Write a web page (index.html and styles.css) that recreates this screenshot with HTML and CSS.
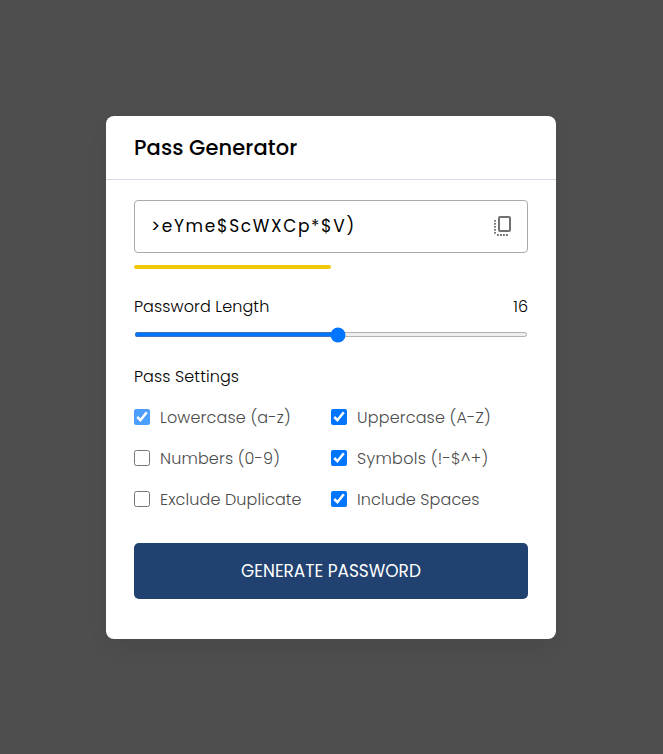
FILE: index.html
```html
<!DOCTYPE html>
<html lang="en">
<head>
<meta charset="utf-8">
<title>Pass Generator</title>
<link rel="stylesheet" href="styles.css">
</head>
<body>
<main class="card">
  <h1 class="title">Pass Generator</h1>
  <div class="content">
    <div class="password">
      <span class="value">&gt;eYme$ScWXCp*$V)</span>
      <svg class="copy" viewBox="0 0 20 22" aria-hidden="true">
        <rect x="6" y="2" width="11" height="14" rx="1"/>
        <path class="dots" d="M2 5V20M4 20H15"/>
      </svg>
    </div>
    <div class="strength"></div>
    <div class="row"><label for="length">Password Length</label><span class="count">16</span></div>
    <input class="range" id="length" type="range" min="1" max="30" value="16">
    <h2 class="settings">Pass Settings</h2>
    <div class="options">
      <label class="option"><input type="checkbox" checked class="locked"><span class="wide">Lowercase (a-z)</span></label>
      <label class="option"><input type="checkbox" checked><span class="wide">Uppercase (A-Z)</span></label>
      <label class="option"><input type="checkbox"><span class="wide">Numbers (0-9)</span></label>
      <label class="option"><input type="checkbox" checked><span class="widest">Symbols (!-$^+)</span></label>
      <label class="option"><input type="checkbox"><span>Exclude Duplicate</span></label>
      <label class="option"><input type="checkbox" checked><span>Include Spaces</span></label>
    </div>
    <button class="generate">GENERATE PASSWORD</button>
  </div>
</main>
</body>
</html>
```
FILE: styles.css
```css
* { box-sizing: border-box; margin: 0; padding: 0; }
body {
  min-height: 754px;
  padding: 116px 0 0 106px;
  background: #4e4e4e;
  font-family: Poppins, Inter, sans-serif;
  font-size: 16px;
  font-weight: 300;
  letter-spacing: .1px;
  color: #000;
}
.card {
  width: 450px;
  height: 523px;
  background: #fff;
  border-radius: 8px;
  box-shadow: 0 10px 20px rgba(0, 0, 0, .06);
}
.title {
  height: 64px;
  padding: 0 28px;
  border-bottom: 1px solid #d4dbe5;
  font-size: 21px;
  font-weight: 500;
  letter-spacing: .1px;
  line-height: 63px;
}
.content { padding: 20px 28px 0; }
.password {
  display: flex;
  align-items: center;
  justify-content: space-between;
  height: 53px;
  padding: 0 14px 0 16px;
  border: 1px solid #aaa;
  border-radius: 4px;
  font-size: 17px;
  font-weight: 400;
}
.value { margin-top: -2px; letter-spacing: 1.65px; }
.copy { width: 20px; height: 22px; margin-top: -1px; fill: none; stroke: #707070; stroke-width: 2; }
.copy .dots { stroke-width: 1.8; stroke-dasharray: 1.8 1.2; }
.strength { width: 50%; height: 4px; margin-top: 12px; border-radius: 2px; background: #f1c80b; }
.row { display: flex; justify-content: space-between; height: 24px; margin-top: 26px; line-height: 24px; }
.count { letter-spacing: 0; }
.range { display: block; width: 100%; height: 5px; margin-top: 13px; }
.settings { height: 24px; margin-top: 28px; font-size: 16px; font-weight: 300; line-height: 24px; }
.options { display: grid; grid-template-columns: 1fr 1fr; grid-auto-rows: 41px; margin-top: 8px; }
.option { display: flex; align-items: center; gap: 10px; color: #4c4c4c; white-space: nowrap; }
.option input { width: 16px; height: 16px; margin-bottom: 2px; }
.option .wide { letter-spacing: .15px; }
.option .widest { letter-spacing: .28px; }
.locked { filter: opacity(.7); }
.generate {
  display: block;
  width: 100%;
  height: 56px;
  margin-top: 23px;
  border: 0;
  border-radius: 5px;
  background: #214270;
  color: #fff;
  font: 400 16.96px Poppins, Inter, sans-serif;
}
```
